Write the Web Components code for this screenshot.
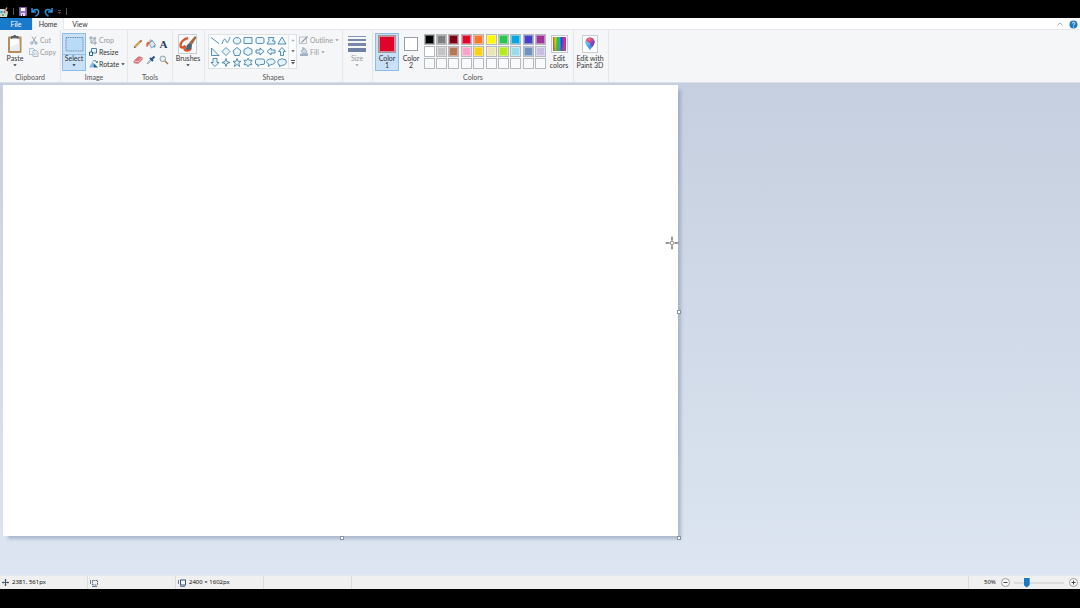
<!DOCTYPE html>
<html lang="en">
<head>
<meta charset="utf-8">
<title>Paint</title>
<style>
html,body{margin:0;height:100%;overflow:hidden}
body{background:#000;color:#333;font:7px/7px Lato,"Open Sans",sans-serif}
</style>
</head>
<body>
<paint-app></paint-app>
<script>
const S = (w, h, body) => `<svg width="${w}" height="${h}" viewBox="0 0 ${w} ${h}" fill="none" aria-hidden="true">${body}</svg>`;
const ICONS = {
  app: S(9,10,'<path d="M0 2h4l4 3-1 5H0z" fill="#c9d8ce"/><circle cx="1.500" cy="5" r="1.300" fill="#4a9ccb"/><circle cx="3" cy="8" r="1.100" fill="#69a84f"/><circle cx="4.500" cy="5" r="1" fill="#c94a3c"/><path d="M5 4l2-3.500" stroke="#d9a05b" stroke-width="1.500"/>'),
  save: S(8,9,'<path d="M.5.5h7v8h-7z" fill="#9a72bd" stroke="#8058a5"/><path d="M2 1h4v3H2z" fill="#fff"/><path d="M2 6h4v3H2z" fill="#e9def3"/><path d="M3 7h1v2H3z" fill="#674386"/>'),
  undo: S(9,10,'<path d="M1 1v4h4M1.500 4.500C4 1.500 8 2 7.600 5.500 7.300 7.500 6 8.500 4.500 9.200" stroke="#2991dc" stroke-width="1.500"/>'),
  redo: S(9,10,'<path d="M8 1v4H4M7.500 4.500C5 1.500 1 2 1.400 5.500 1.700 7.500 3 8.500 4.500 9.200" stroke="#2991dc" stroke-width="1.500"/>'),
  custom: S(5,6,'<path d="M1 1.500h3" stroke="#555"/><path d="M.5 3h4L2.500 5z" fill="#555"/>'),
  down: S(4,3,'<path d="M.3.3h3.400L2 2.300z" fill="currentColor"/>'),
  up: S(4,3,'<path d="M.3 2.300h3.400L2 .3z" fill="currentColor"/>'),
  more: S(4,5,'<path d="M0 .5h4" stroke="currentColor"/><path d="M0 2h4L2 4.500z" fill="currentColor"/>'),
  collapse: S(6,4,'<path d="M.5 3.200L3 1l2.500 2.200" stroke="#aaa"/>'),
  paste: S(16,20,'<rect x="1" y="2.500" width="13.500" height="16.500" rx="1" fill="#b88b5b"/><path d="M3 4.500h9.500v12.500H3z" fill="#fbfcfd"/><path d="M3 13l9.500-4v8H3z" fill="#e8eef3"/><path d="M4 2h2c.5-1.500 3-1.500 3.500 0h2v3H4z" fill="#5c6269"/><path d="M5 4.500h5.500" stroke="#b9c1c9"/>'),
  cut: S(8,9,'<path d="M2 .5l3.500 6M6 .5L2.500 6.500" stroke="#9a9fa7" stroke-width=".9"/><circle cx="1.800" cy="7" r="1.200" stroke="#8fa6c0"/><circle cx="6" cy="7" r="1.200" stroke="#8fa6c0"/>'),
  copy: S(10,9,'<path d="M.5.5h4l1.500 1.500v4.500H.5z" fill="#edf2f7" stroke="#a7b6c7" stroke-width=".8"/><path d="M4 2.500h3.500l1.500 1.500v4.500H4z" fill="#edf2f7" stroke="#9eafc3" stroke-width=".8"/><path d="M5 5h3M5 6.500h3" stroke="#b7c5d4" stroke-width=".6"/>'),
  select: S(19,16,'<rect x="1" y="1.500" width="17" height="13.500" fill="#b9dbf7" stroke="#557ca2" stroke-width=".8" stroke-dasharray="1.200 .6"/>'),
  crop: S(8,9,'<path d="M2 0v7h6M0 2h6v7M2 7l5-6" stroke="#8c99ab" stroke-width=".9"/>'),
  resize: S(8,8,'<path d="M2.500.5h5v4.500h-5z" fill="#e4f3fc" stroke="#4a81a1"/><path d="M.5 4h3v3.500h-3z" fill="#fff" stroke="#1e6488"/>'),
  rotate: S(9,8,'<path d="M0 7.500h4V1z" fill="#86b7da"/><path d="M4.500 7.500H9L4.500 3z" fill="#17658e"/><path d="M4 1c2-1 3.500 0 3.800 1.500M6.500 1.500L8 3l.7-2" stroke="#1a6e9e" stroke-width=".8"/>'),
  pencil: S(10,10,'<path d="M2 8L8 2" stroke="#d9a850" stroke-width="2"/><path d="M1.500 7.200L7.200 1.500" stroke="#7a653f" stroke-width=".5"/><path d="M.7 9.300l.7-2 1.300 1.300z" fill="#3b4043"/><path d="M7.300 1.500L8.500 2.700" stroke="#a65748" stroke-width="1.800"/>'),
  bucket: S(10,10,'<path d="M3 4l3.500-2.500L9.500 6 5.500 9z" fill="#dce8f0" stroke="#6b8ca6" stroke-width=".8"/><path d="M4.500 3C3 0 5.500 0 6 3" stroke="#667b8d" stroke-width=".7"/><path d="M4.500 3C1 2 0 4 .3 7.500 1.500 8.500 2.500 7 2.500 5.500z" fill="#d9663f"/><circle cx="8.500" cy="7.500" r="1" fill="#4a90c2"/>'),
  eraser: S(10,8,'<path d="M1 5L5.500.8l3.700.7v2L5 7.500l-4-.7z" fill="#e0757f" stroke="#bd606a" stroke-width=".6"/><path d="M1.300 5.200l3.700.5L9 1.800" stroke="#fae4e6" stroke-width=".7"/>'),
  picker: S(10,10,'<path d="M1 9l1-2 3-3 1 1-3 3z" fill="#bddbf0" stroke="#7790a5" stroke-width=".6"/><path d="M4 3l3 3M5.500 4.500L8.500 1.500" stroke="#24578c" stroke-width="2"/>'),
  zoom: S(10,10,'<circle cx="3.800" cy="3.800" r="2.800" fill="#e3f0f7" stroke="#87929c" stroke-width=".9"/><path d="M6 6l3 3" stroke="#a77b51" stroke-width="1.500"/>'),
  brush: S(20,20,'<rect x=".5" y=".5" width="18" height="19" fill="#f8f9fa" stroke="#c9cfd6"/><path d="M10 4C6 5 2.500 8 2.500 11.500c0 3 3 2 5 .5-2 3-1 5 2 4.500 2-.5 3-1 3.500-2.500" stroke="#dc562d" stroke-width="2.400"/><path d="M11 9l6-7 1.500 1.500-5 8z" fill="#a3673b"/><path d="M9 11l2.500-2 2.500 2.500c0 4-3 5-7 4 2-1 1-3 2-4.500z" fill="#48617b"/>'),
  outline: S(10,10,'<path d="M.5 2h7v6.500h-7z" stroke="#a4adb9" stroke-width=".7"/><path d="M2.500 7.500l6-6" stroke="#929ead" stroke-width="1.300"/>'),
  fill: S(10,10,'<path d="M2 4l3.500-3L8 5 4.500 7.500z" fill="#cbd5e2" stroke="#98a9be" stroke-width=".8"/><path d="M1 7c2-1 5 0 8-1v3H1z" fill="#9daec6"/><path d="M4 3V0" stroke="#91a1b7"/>'),
  size: S(20,20,'<path d="M1 2.500h18" stroke="#8995b1"/><path d="M1 6h18" stroke="#7887aa" stroke-width="2"/><path d="M1 10.500h18" stroke="#7887aa" stroke-width="3"/><path d="M1 16h18" stroke="#7080a5" stroke-width="4"/>'),
  p3d: S(16,18,'<rect x=".5" y=".5" width="15" height="17" fill="#fff" stroke="#c9cdd3"/><path d="M8 15.500C7 13 3.500 10 3.500 7a4.500 4.500 0 0 1 9 0c0 3-3.500 6-4.500 8.500z" fill="#3f9be8"/><path d="M4 5.500C5 2 10 1.500 12 5L8.500 8.500z" fill="#df3e80"/><path d="M12 5c1.500 2 0 5-2 7.500L8 8.500z" fill="#7b43bf"/><path d="M4 5.500L8.500 8.500 5.500 11C4 9.500 3 7.500 4 5.500z" fill="#67b9ef"/><path d="M5 5c1-2 3-2 4-1.500L8 6z" fill="#f47960"/>'),
  help: S(9,9,'<circle cx="4.500" cy="4.500" r="4" fill="#1b7bc4"/><path d="M3.300 3.500c0-2 2.800-1.700 2.500 0-.1 1-1.200 1-1.200 2M4.500 6.500v1" stroke="#fff" stroke-width=".9"/>'),
  move: S(7,7,'<path d="M3.500 0v7M0 3.500h7" stroke="#44546c"/><path d="M2.500 1.200h2M2.500 5.800h2M1.200 2.500v2M5.800 2.500v2" stroke="#44546c" stroke-width=".7"/>'),
  selsize: S(8,8,'<rect x="2.500" y="1.500" width="5" height="4.500" stroke="#4c6078" stroke-dasharray="1.200 .6"/><path d="M.5 1v4M2 7.500h5" stroke="#4c6078" stroke-width=".8"/>'),
  imgsize: S(8,8,'<rect x="2.500" y="1" width="5" height="5" fill="#f4f9fd" stroke="#385777"/><path d="M.5 1v4M2 7.500h5" stroke="#4c6078" stroke-width=".8"/>'),
  minus: S(9,9,'<circle cx="4.500" cy="4.500" r="4" fill="#fafafa" stroke="#888" stroke-width=".8"/><path d="M2.500 4.500h4" stroke="#444"/>'),
  plus: S(9,9,'<circle cx="4.500" cy="4.500" r="4" fill="#fafafa" stroke="#888" stroke-width=".8"/><path d="M2.500 4.500h4M4.500 2.500v4" stroke="#444"/>')
};
const SHAPES = [
  ['Line','M1 1.500L9 7.500'],['Curve','M1 8C3 2 4 2 5 5s2 2 4-4'],['Oval','M5 1.500c5 0 5 6.500 0 6.500s-5-6.500 0-6.500z'],['Rectangle','M1 1.500h8v6H1z'],['Rounded rectangle','M2.500 1.500h5Q9 1.500 9 3v3q0 1.500-1.500 1.500h-5Q1 7.500 1 6V3q0-1.500 1.500-1.500z'],['Polygon','M1 8l2-3.500L2.500 1.500H8L6.500 5 9 5v3z'],['Triangle','M5 1L9 8H1z'],
  ['Right triangle','M1.500 1v7.500H9z'],['Diamond','M5 .5l4 4-4 4-4-4z'],['Pentagon','M5 .5l4 3.300L7.500 8.500h-5L1 3.800z'],['Hexagon','M5 .5l4 2v4l-4 2-4-2v-4z'],['Right arrow','M1 3h4V1l4 3.500L5 8V6H1z'],['Left arrow','M9 3H5V1L1 4.500 5 8V6h4z'],['Up arrow','M3.500 8.500V4.500h-2L5 .5l3.500 4h-2v4z'],
  ['Down arrow','M3 .5V4.500H1L5 8.500l4-4H7v-4z'],['Four-point star','M5 .5L6 3.500 9 4.500 6 5.500 5 8.500 4 5.500 1 4.500 4 3.500z'],['Five-point star','M5 .5l1 2.800h3L6.800 5.200 7.700 8.500 5 6.500 2.300 8.500l.9-3.300L1 3.300h3z'],['Six-point star','M5 .3l1.200 2h2.800L7.700 4.500 9 6.700H6.200L5 8.700 3.800 6.700H1L2.300 4.500 1 2.300h2.800z'],['Rounded callout','M2 1h6q1.500 0 1.500 1.500v2.500q0 1.500-1.500 1.500H5L3 8.500V6.500H2Q.5 6.500.5 5V2.500Q.5 1 2 1z'],['Oval callout','M5 1c5.500 0 5.500 5.500 0 5.500L2.500 8.500l.3-2.500C-1 4.500.5 1 5 1z'],['Cloud callout','M3 1.500Q5 0 7 1.500 9 1 9 3 10 5 8.500 6 7.500 7.800 6 7L2.500 8.500 2.800 7Q1 7 1.200 5.500 0 4 1.300 3 1 1.500 3 1.500z']
];
const COLORS = [['Black','#000'],['Gray-50%','#7f7f7f'],['Dark red','#7c0318'],['Red','#e0032a'],['Orange','#fa772e'],['Yellow','#fff700'],['Green','#2bc44f'],['Turquoise','#08a5e1'],['Indigo','#433fc6'],['Purple','#9b349b'],['White','#fff'],['Gray-25%','#c3c3c3'],['Brown','#b5795a'],['Rose','#f9a2ca'],['Gold','#fbd112'],['Light yellow','#ece4b3'],['Lime','#b5ec20'],['Light turquoise','#99dcea'],['Blue-gray','#7092be'],['Lavender','#c9bfe6'],...Array.from({length:10},(_,i)=>['Custom color '+(i+1),'#f8f9fa'])];

const BTN = `button{all:unset;box-sizing:border-box;cursor:default}button:focus-visible{outline:1px solid #2991dc}svg{display:block}`;
function define(name, render) {
  customElements.define(name, class extends HTMLElement {
    constructor(){ super(); this.attachShadow({mode:'open'}); }
    connectedCallback(){ this.shadowRoot.innerHTML = render(this); }
  });
}

define('paint-icon', el => `<style>:host{display:block;flex:none}svg{display:block}</style>${ICONS[el.getAttribute('name')]}`);

define('title-bar', () => `<style>${BTN}
:host{display:flex;align-items:center;height:18px;padding-top:5px;box-sizing:border-box;background:#000;gap:4px}
i{width:1px;height:7px;background:#555}i:first-of-type{margin-right:1px}</style>
<paint-icon name="app"></paint-icon><i></i>
<button aria-label="Save"><paint-icon name="save"></paint-icon></button>
<button aria-label="Undo"><paint-icon name="undo"></paint-icon></button>
<button aria-label="Redo"><paint-icon name="redo"></paint-icon></button>
<button aria-label="Customize Quick Access Toolbar"><paint-icon name="custom"></paint-icon></button><i></i>`);

define('tab-strip', () => `<style>${BTN}
:host{display:flex;height:12px;background:#fff;box-shadow:inset 0 -1px #e6e8eb}
button{text-align:center;line-height:12px;width:32px;color:#333}
.file{background:#1979ca;color:#fff}.on{background:#f5f6f7;border:solid #e6e8eb;border-width:0 1px}
.end{margin-left:auto;display:flex;align-items:center;gap:6px;padding-right:2px}.end button{width:auto}</style>
<button class="file">File</button><button class="on">Home</button><button>View</button>
<div class="end"><button aria-label="Minimize the Ribbon"><paint-icon name="collapse"></paint-icon></button><button aria-label="Help"><paint-icon name="help"></paint-icon></button></div>`);

define('ribbon-group', el => `<style>
:host{display:flex;flex-direction:column;box-sizing:border-box;flex:none;border-right:1px solid #e4e6e9}
.body{display:flex;flex:1;padding-top:3px;padding-left:var(--inset,1px)}
.cap{height:10px;line-height:10px;text-align:center;color:#555}</style>
<div class="body"><slot></slot></div><div class="cap">${el.getAttribute('label')||''}</div>`);

define('big-button', el => `<style>${BTN}
:host{display:block;flex:none}
button{display:flex;flex-direction:column;align-items:center;width:100%;height:38px;text-align:center;color:#333}
.pic{height:22px;display:flex;align-items:center;justify-content:center;width:100%;box-sizing:border-box}
span{white-space:pre}
.m{margin-top:2px}
:host([active]) button{background:#c9e0f7;box-shadow:inset 0 0 0 1px #8dbce6}
:host([split]) .pic{box-shadow:inset 0 -1px #8dbce6}
:host([disabled]) button{color:#999}</style>
<button ${el.hasAttribute('disabled')?'disabled':''}><div class="pic"><slot></slot></div><span>${el.getAttribute('label')}</span>${el.hasAttribute('menu')?'<paint-icon class="m" name="down"></paint-icon>':''}</button>`);

define('small-button', el => `<style>${BTN}
:host{display:block}button{display:flex;align-items:center;height:12px;gap:1px;color:#333}
button[disabled]{color:#999}.i{width:10px;display:flex;justify-content:center}.m{margin-left:1px}</style>
<button ${el.hasAttribute('off')?'disabled':''}><span class="i"><paint-icon name="${el.getAttribute('icon')}"></paint-icon></span>${el.textContent}${el.hasAttribute('menu')?'<paint-icon class="m" name="down"></paint-icon>':''}</button>`);

define('tool-grid', () => `<style>${BTN}
:host{display:grid;grid-template:16px 16px/13px 13px 13px;padding-top:3px}
button{display:flex;align-items:center;justify-content:center;font:bold 11px/11px "Liberation Serif",serif;color:#263e5c}</style>
<button aria-label="Pencil"><paint-icon name="pencil"></paint-icon></button><button aria-label="Fill with color"><paint-icon name="bucket"></paint-icon></button><button aria-label="Text">A</button>
<button aria-label="Eraser"><paint-icon name="eraser"></paint-icon></button><button aria-label="Color picker"><paint-icon name="picker"></paint-icon></button><button aria-label="Magnifier"><paint-icon name="zoom"></paint-icon></button>`);

define('shape-gallery', () => `<style>${BTN}
:host{display:flex;height:35px;margin-top:1px;border:1px solid #dde2e7;box-sizing:border-box;background:#fafcfd;width:89px}
.g{display:grid;flex:1;grid-template-columns:repeat(7,1fr);grid-auto-rows:11px}
button{display:flex;align-items:center;justify-content:center}
path{fill:#e6f4fb;stroke:#32759d;stroke-width:.8}.open path{fill:none}
.s{width:7px;display:grid;grid-template-rows:repeat(3,11px);border-left:1px solid #e2e5e9;color:#555}.s button:first-child{color:#aaa}</style>
<div class="g">${SHAPES.map(([n,d],i)=>`<button aria-label="${n}" ${i<2?'class="open"':''}>${S(10,9,`<path d="${d}"/>`)}</button>`).join('')}</div>
<div class="s"><button aria-label="Scroll up"><paint-icon name="up"></paint-icon></button><button aria-label="Scroll down"><paint-icon name="down"></paint-icon></button><button aria-label="More shapes"><paint-icon name="more"></paint-icon></button></div>`);

define('color-chip', () => `<style>:host{display:block;box-sizing:border-box;width:var(--s);height:var(--s);border:1px solid #9c9c9c;background:var(--c);box-shadow:inset 0 0 0 1px var(--ring,#fff)}</style>`);

define('color-palette', () => `<style>${BTN}
:host{display:grid;width:124px;grid-template-columns:repeat(10,1fr);grid-auto-rows:12px;margin-top:1px;justify-items:center;height:36px}
button{width:11px;height:11px;border:1px solid #b5b8bc;background:var(--c);box-shadow:inset 0 0 0 1px #ffffff66}</style>
${COLORS.map(([n,c])=>`<button aria-label="${n}" style="--c:${c}"></button>`).join('')}`);

define('color-spectrum', () => `<style>:host{display:block;box-sizing:border-box;width:17px;height:18px;border:1px solid #c3c8ce;padding:1px;background:#fff}
div{height:100%;background:linear-gradient(#0000 35%,#7777),linear-gradient(90deg,#e52b22,#dfd416,#2bc72c,#18b8c9,#2640dc,#c92bc9,#db2947)}</style><div></div>`);

define('paint-ribbon', () => `<style>
:host{display:flex;height:53px;box-sizing:border-box;background:#f5f6f7;border-bottom:1px solid #dadfe5}
.col{display:flex;flex-direction:column;padding-top:1px}
.clip{width:61px;--inset:3px}.img{width:67px}.tools{width:45px;--inset:3px}.br{width:32px}.shapes{width:138px;--inset:3px}.size{width:30px;--inset:2px}.colors{width:201px;--inset:2px}.p3d{width:35px;--inset:2px}
.w24{width:24px}.w28{width:28px}.gap{margin-left:2px}</style>
<ribbon-group class="clip" label="Clipboard"><big-button class="w24" label="Paste" menu><paint-icon name="paste"></paint-icon></big-button>
<div class="col gap"><small-button icon="cut" off>Cut</small-button><small-button icon="copy" off>Copy</small-button></div></ribbon-group>
<ribbon-group class="img" label="Image"><big-button class="w24" label="Select" menu active split><paint-icon name="select"></paint-icon></big-button>
<div class="col gap"><small-button icon="crop" off>Crop</small-button><small-button icon="resize">Resize</small-button><small-button icon="rotate" menu>Rotate</small-button></div></ribbon-group>
<ribbon-group class="tools" label="Tools"><tool-grid></tool-grid></ribbon-group>
<ribbon-group class="br"><big-button class="w28" label="Brushes" menu><paint-icon name="brush"></paint-icon></big-button></ribbon-group>
<ribbon-group class="shapes" label="Shapes"><shape-gallery></shape-gallery>
<div class="col gap"><small-button icon="outline" menu off>Outline</small-button><small-button icon="fill" menu off>Fill</small-button></div></ribbon-group>
<ribbon-group class="size"><big-button class="w24" label="Size" menu disabled><paint-icon name="size"></paint-icon></big-button></ribbon-group>
<ribbon-group class="colors" label="Colors"><big-button class="w24" label="Color
1" active><color-chip style="--s:18px;--c:#e0032a;--ring:#d98a99"></color-chip></big-button><big-button class="w24" label="Color
2"><color-chip style="--s:14px;--c:#fff"></color-chip></big-button>
<color-palette></color-palette><big-button class="w24" label="Edit
colors"><color-spectrum></color-spectrum></big-button></ribbon-group>
<ribbon-group class="p3d"><big-button class="w28" label="Edit with
Paint 3D"><paint-icon name="p3d"></paint-icon></big-button></ribbon-group>`);

define('paint-canvas', () => `<style>
:host{display:block;flex:1;min-height:0;padding:2px 3px;background:linear-gradient(#c5cfdf,#dce5f1)}
.page{position:relative;width:62.85%;aspect-ratio:675/451;background:#fff;box-shadow:4px 4px 3px -1px #8494af88}
.h{position:absolute;width:2px;height:2px;border:1px solid #8a939e;background:#fff;margin:-1px}
.e{left:100%;top:50%}.s{left:50%;top:100%}.c{left:100%;top:100%}
.s,.c{margin-top:0}
svg{position:absolute;left:99.1%;top:35%;transform:translate(-50%,-50%)}</style>
<div class="page"><div class="h e"></div><div class="h s"></div><div class="h c"></div>
<svg width="13" height="13" fill="none" stroke="#333" aria-hidden="true"><path d="M6.500 0v4M6.500 9v4M0 6.500h4M9 6.500h4"/><circle cx="6.500" cy="6.500" r="1.800" stroke="#888"/></svg></div>`);

define('status-bar', () => `<style>${BTN}
:host{display:flex;height:14px;box-sizing:border-box;background:#f0f0f0;border-top:1px solid #e4e7eb;font:6px/13px "Noto Sans","Open Sans",sans-serif;color:#111}
.c{width:88px;box-sizing:border-box;border-right:1px solid #dcdcdc;display:flex;align-items:center;gap:3px;padding-left:2px}
.f{flex:1}.z{width:111px;box-sizing:border-box;padding:0 2px 0 15px;display:flex;align-items:center;justify-content:space-between}
input{appearance:none;width:50px;height:11px;margin:0;background:linear-gradient(#dcdcdc,#dcdcdc) center/100% 2px no-repeat}
input::-webkit-slider-thumb{appearance:none;width:6px;height:10px;background:#1979ca;clip-path:polygon(0 0,100% 0,100% 75%,50% 100%,0 75%)}</style>
<div class="c"><paint-icon name="move"></paint-icon>2381, 561px</div><div class="c"><paint-icon name="selsize"></paint-icon></div><div class="c"><paint-icon name="imgsize"></paint-icon>2400 × 1602px</div><div class="c"></div><div class="c f"></div>
<div class="z"><label for="z">50%</label><button aria-label="Zoom out"><paint-icon name="minus"></paint-icon></button><input id="z" type="range" min="0" max="14" value="3"><button aria-label="Zoom in"><paint-icon name="plus"></paint-icon></button></div>`);

define('paint-app', () => `<style>:host{display:flex;flex-direction:column;height:100vh;padding-bottom:19px;box-sizing:border-box}</style>
<title-bar></title-bar><tab-strip></tab-strip><paint-ribbon></paint-ribbon><paint-canvas></paint-canvas><status-bar></status-bar>`);
</script>
</body>
</html>
